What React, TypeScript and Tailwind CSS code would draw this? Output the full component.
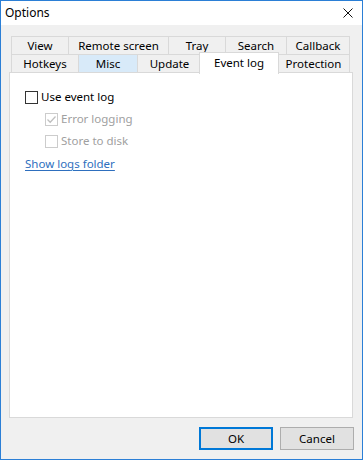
import React from 'react';

const font = { fontFamily: '"Noto Sans", "Liberation Sans", sans-serif' };

interface CheckProps {
  checked?: boolean;
  disabled?: boolean;
}

const CheckBox: React.FC<CheckProps> = ({ checked, disabled }) => (
  <span
    className={`w-[13px] h-[13px] shrink-0 border bg-white flex items-center justify-center ${
      disabled ? 'border-[#cccccc]' : 'border-[#333333]'
    }`}
  >
    {checked && (
      <svg width="11" height="11" viewBox="0 0 11 11">
        <path
          d="M1.5 5.5 L4.2 8.2 L9.5 2.5"
          stroke={disabled ? '#bfbfbf' : '#333333'}
          strokeWidth="1.3"
          fill="none"
        />
      </svg>
    )}
  </span>
);

const topRow = [
  { label: 'View', w: 'w-[57px]' },
  { label: 'Remote screen', w: 'w-[100px]' },
  { label: 'Tray', w: 'w-[57px]' },
  { label: 'Search', w: 'w-[61px]' },
  { label: 'Callback', w: 'w-[64px]' }
];

const bottomRow = [
  { label: 'Hotkeys', w: 'w-[67px]' },
  { label: 'Misc', w: 'w-[59px]', hover: true },
  { label: 'Update', w: 'w-[64px]' },
  { label: 'Event log', w: 'w-[80px]', active: true },
  { label: 'Protection', w: 'w-[73px]' }
];

export default function App() {
  return (
    <div
      className="w-[363px] h-[460px] border border-[#2b7fd6] bg-[#f0f0f0] flex flex-col text-[11.5px] text-black"
      style={font}
    >
      {/* Title bar */}
      <div className="h-[24px] bg-white flex items-center justify-between pl-[4px] pr-[9px]">
        <span className="leading-none text-[12px]">Options</span>
        <svg width="10" height="10" viewBox="0 0 10 10">
          <path d="M0.5 0.5 L9.5 9.5 M9.5 0.5 L0.5 9.5" stroke="#111" strokeWidth="1" fill="none" />
        </svg>
      </div>

      <div className="flex-1 flex flex-col pt-[11px]">
        {/* Tabs */}
        <div className="ml-[10px] flex flex-col">
          <div className="flex h-[18px]">
            {topRow.map((t, i) => (
              <div
                key={t.label}
                className={`${t.w} border-t border-l ${i === topRow.length - 1 ? 'border-r' : ''} border-[#d9d9d9] flex items-center justify-center leading-none pt-[1px]`}
              >
                {t.label}
              </div>
            ))}
          </div>
          <div className="flex h-[18px] border-t border-[#d9d9d9] w-[339px]">
            {bottomRow.map((t, i) =>
              t.active ? (
                <div
                  key={t.label}
                  className={`${t.w} relative z-10 -mx-[2px] -mt-[3px] h-[22px] bg-white border-t border-l border-r border-[#d9d9d9] flex items-center justify-center leading-none pb-[1px]`}
                >
                  {t.label}
                </div>
              ) : (
                <div
                  key={t.label}
                  className={`${t.w} border-l ${i === bottomRow.length - 1 ? 'border-r' : ''} border-[#d9d9d9] flex items-center justify-center leading-none pt-[1px] ${
                    t.hover ? 'bg-[#d8eaf9]' : ''
                  }`}
                >
                  {t.label}
                </div>
              )
            )}
          </div>
        </div>

        {/* Panel */}
        <div className="ml-[8px] w-[344px] h-[346px] bg-white border border-[#d9d9d9] pl-[15px] pt-[13px] flex flex-col">
          <div className="h-[22px] flex items-center gap-[3px]">
            <CheckBox />
            <span className="leading-none">Use event log</span>
          </div>
          <div className="h-[22px] flex items-center gap-[3px] pl-[20px] text-[#a0a0a0]">
            <CheckBox checked disabled />
            <span className="leading-none">Error logging</span>
          </div>
          <div className="h-[22px] flex items-center gap-[3px] pl-[20px] text-[#a0a0a0]">
            <CheckBox disabled />
            <span className="leading-none">Store to disk</span>
          </div>
          <div className="h-[22px] flex items-center pt-[2px]">
            <span className="leading-none text-[#2e6fbe] underline underline-offset-2">Show logs folder</span>
          </div>
        </div>

        {/* Buttons */}
        <div className="flex justify-end gap-[7px] pr-[8px] mt-[9px]">
          <button className="w-[74px] h-[23px] border-2 border-[#0078d7] bg-[#e1e1e1] flex items-center justify-center leading-none">
            OK
          </button>
          <button className="w-[74px] h-[23px] border border-[#adadad] bg-[#e1e1e1] flex items-center justify-center leading-none">
            Cancel
          </button>
        </div>
      </div>
    </div>
  );
}
